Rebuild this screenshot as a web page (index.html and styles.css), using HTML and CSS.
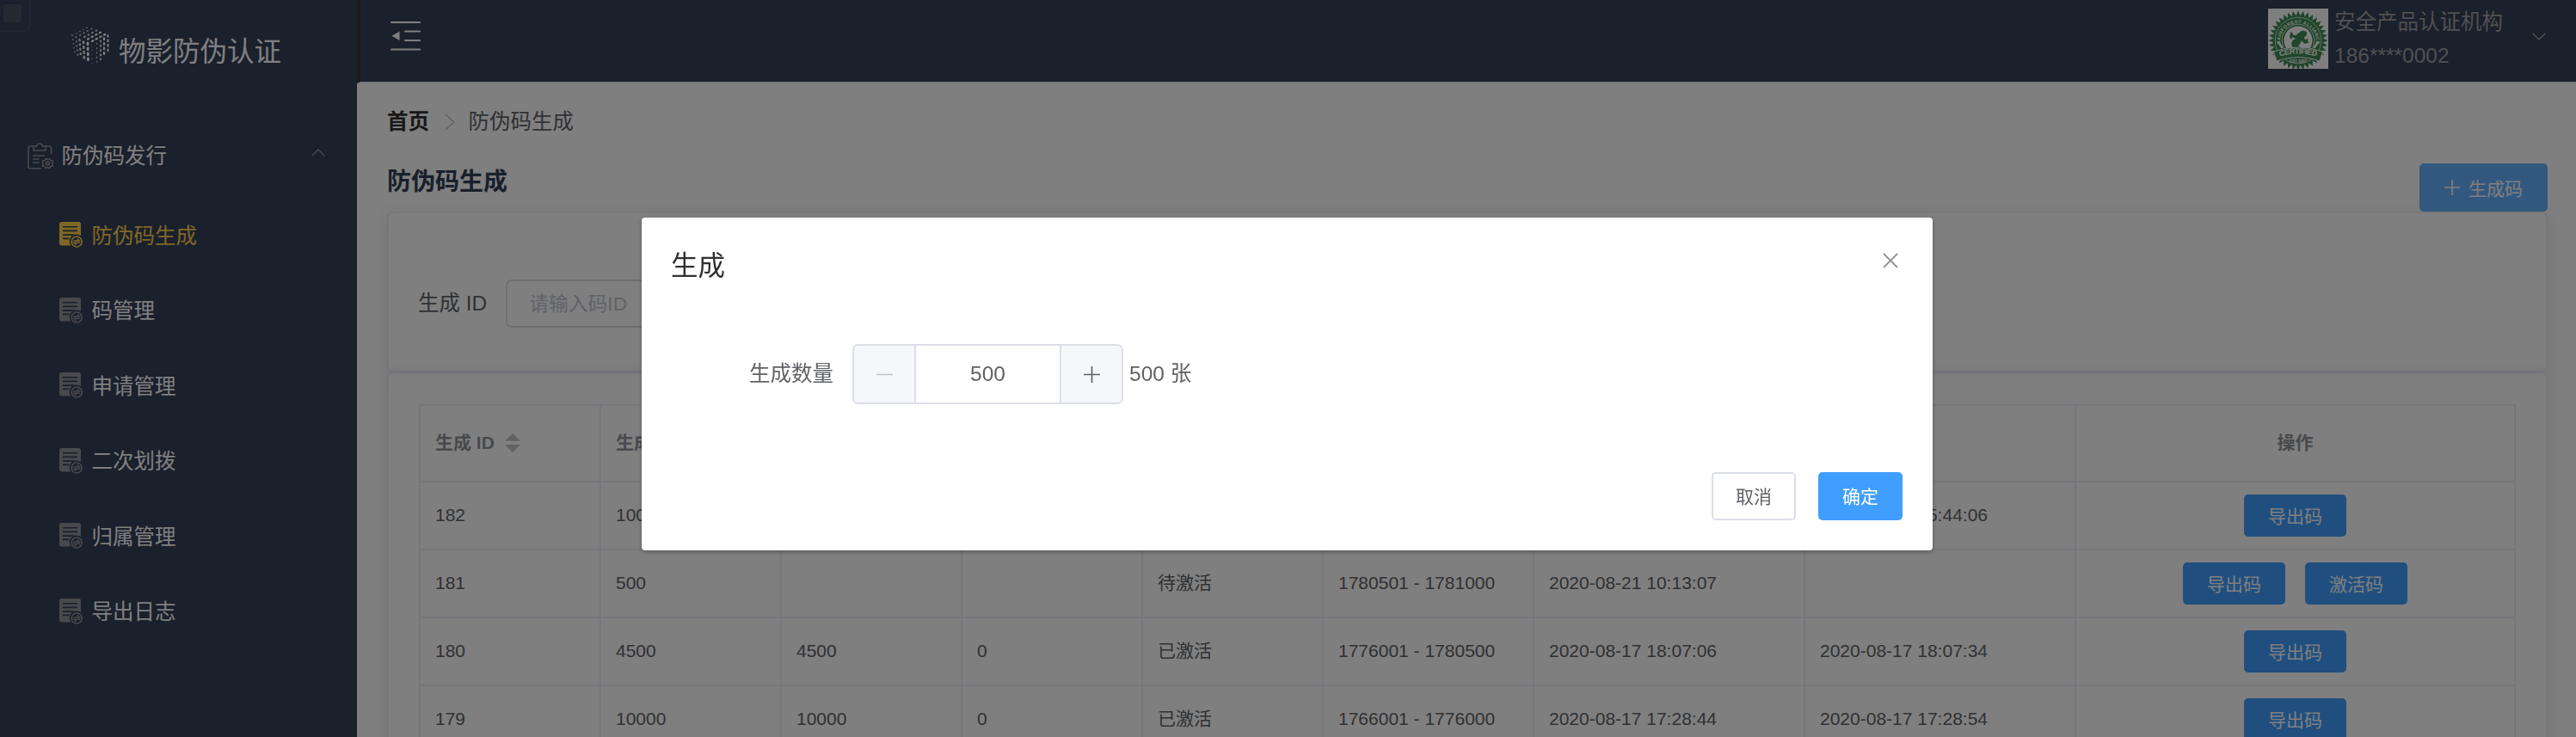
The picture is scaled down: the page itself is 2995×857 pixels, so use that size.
FILE: index.html
```html
<!DOCTYPE html>
<html lang="zh-CN">
<head>
<meta charset="utf-8">
<title>防伪码生成</title>
<link rel="stylesheet" href="styles.css">
</head>
<body>
<svg class="defs" width="0" height="0" aria-hidden="true">
  <defs>
    <symbol id="doc" viewBox="0 0 28 31">
      <path fill="currentColor" fill-rule="evenodd" d="M3 0H22.500Q25 0 25 2.500V16.200A8.200 8.200 0 0 0 13.300 27.500H3Q0 27.500 0 24.500V3Q0 0 3 0ZM4 5V6.600H21V5ZM4 9.600V11.200H21V9.600ZM4 14.300V15.900H16L18 14.300ZM4 18.600V20.200H11.500V18.600Z"/>
      <circle cx="20.200" cy="23" r="6" fill="none" stroke="currentColor" stroke-width="1.700"/>
      <path d="M16.500 22H23.500L20.800 19.300M23.900 24.200H17L19.700 26.900" fill="none" stroke="currentColor" stroke-width="1.400"/>
    </symbol>
    <path id="tooth" d="M-3.300 -27L0 -34.500L3.300 -27Z"/>
    <g id="teeth3"><use href="#tooth"/><use href="#tooth" transform="rotate(10)"/><use href="#tooth" transform="rotate(20)"/></g>
    <g id="teeth9"><use href="#teeth3"/><use href="#teeth3" transform="rotate(30)"/><use href="#teeth3" transform="rotate(60)"/></g>
    <path id="arcTop" d="M15.500 46A21 21 0 1 1 54.500 46"/>
    <path id="arcMid" d="M12.500 56Q35 49 57.500 56"/>
  </defs>
</svg>

<div class="app">
  <aside class="sidebar">
    <div class="corner"><span class="corner-dot"></span></div>
    <div class="brand">
      <svg class="brand-logo" viewBox="0 0 50 52">
        <g stroke="#fff" stroke-linecap="round" fill="none">
          <path d="M4 15L7 35" stroke-width="1.800" stroke-dasharray="0.100 4.800" opacity=".7"/>
          <path d="M8.300 17L10.500 38" stroke-width="2" stroke-dasharray="0.400 4.700" opacity=".75"/>
          <path d="M12.500 20L14 41" stroke-width="2.400" stroke-dasharray="1 4.400" opacity=".85"/>
          <path d="M17 22.500L18 45" stroke-width="2.600" stroke-dasharray="1.500 4.300" opacity=".9"/>
          <path d="M22 24L22.500 47" stroke-width="2.900" stroke-dasharray="1.800 4.200"/>
          <path d="M27 27V48" stroke-width="1.400" stroke-dasharray="0.100 5" opacity=".6"/>
          <path d="M32.500 24.500V46" stroke-width="1.700" stroke-dasharray="0.500 4.800" opacity=".7"/>
          <path d="M37 21.500V43" stroke-width="2.200" stroke-dasharray="1 4.300" opacity=".85"/>
          <path d="M41 18.500V39" stroke-width="2.400" stroke-dasharray="1.400 4.200"/>
          <path d="M45.500 15V35" stroke-width="2" stroke-dasharray="1.700 3.800"/>
          <path d="M9 13L25 4" stroke-width="1.600" stroke-dasharray="0.100 4.500" opacity=".7"/>
          <path d="M13 15L30 5.500" stroke-width="1.800" stroke-dasharray="0.500 4.500" opacity=".75"/>
          <path d="M18 17L35 8" stroke-width="2" stroke-dasharray="0.900 4.200" opacity=".85"/>
          <path d="M22 19.500L40 10" stroke-width="2.200" stroke-dasharray="1.400 3.800"/>
          <path d="M27 22L45 12.500" stroke-width="2.200" stroke-dasharray="1.600 3.600"/>
        </g>
      </svg>
      <span class="brand-name">物影防伪认证</span>
    </div>
    <nav class="menu">
      <div class="menu-title">
        <svg class="menu-icon" viewBox="0 0 30 31" fill="none" stroke="currentColor" stroke-width="1.600">
          <path d="M7 4H3Q1 4 1 6V28Q1 30 3 30H16M21 4H25Q27.500 4 27.500 6V13"/>
          <path d="M7 9V4H10.500Q11 1 14 1T17.500 4H21V9ZM6 15H20M6 19H13.500M6 23H14"/>
          <circle cx="23.500" cy="24" r="1.900"/>
          <path d="M21.500 18.500L23.500 19.300L25.600 18.500L27.200 20.800H29.400V23L28.700 24L29.400 25.200V27.300H27.200L25.600 29.400L23.500 28.700L21.500 29.400L19.800 27.300H17.600V25.200L18.400 24L17.600 23V20.800H19.800Z" stroke-linejoin="round"/>
        </svg>
        <span>防伪码发行</span>
        <svg class="menu-arrow" viewBox="0 0 16 9"><path d="M.7 8.300L8 1L15.300 8.300" fill="none" stroke="currentColor" stroke-width="1.400"/></svg>
      </div>
      <div class="menu-item active"><svg class="doc"><use href="#doc"/></svg><span>防伪码生成</span></div>
      <div class="menu-item"><svg class="doc"><use href="#doc"/></svg><span>码管理</span></div>
      <div class="menu-item"><svg class="doc"><use href="#doc"/></svg><span>申请管理</span></div>
      <div class="menu-item"><svg class="doc"><use href="#doc"/></svg><span>二次划拨</span></div>
      <div class="menu-item"><svg class="doc"><use href="#doc"/></svg><span>归属管理</span></div>
      <div class="menu-item"><svg class="doc"><use href="#doc"/></svg><span>导出日志</span></div>
    </nav>
  </aside>

  <div class="body">
    <header class="topbar">
      <svg class="fold" viewBox="0 0 35 36"><path d="M1 2H34M17 12.500H34M17 23H34M1 33.500H34" stroke="currentColor" stroke-width="2.200" stroke-linecap="round"/><path d="M1.500 17.800L10.500 12.500V23Z" fill="currentColor"/></svg>
      <div class="user">
        <svg class="avatar" viewBox="0 0 70 70">
          <rect width="70" height="70" fill="#fff"/>
          <g transform="translate(35 37)" fill="#3f8b57">
            <use href="#teeth9"/><use href="#teeth9" transform="rotate(90)"/><use href="#teeth9" transform="rotate(180)"/><use href="#teeth9" transform="rotate(270)"/>
            <circle r="28.500"/>
          </g>
          <circle cx="35" cy="37" r="26.800" fill="none" stroke="#fff" stroke-width=".7"/>
          <circle cx="35" cy="37" r="18.800" fill="none" stroke="#fff" stroke-width=".8"/>
          <circle cx="35" cy="37" r="16.500" fill="#fff"/>
          <path d="M36 28Q39 25 42 26Q45 26 45 29Q46 31 42 33Q42 36 44 36L47 35L46 38L48 39L43 41Q40 39 39 37Q38 41 35 43L38 45H29Q26 42 28 38Q29 36 32 35L28 33L27 36L25 33L26 27L29 29L29 31L32 31Z" fill="#3f8b57"/>
          <path d="M12 39L16 45M58 39L54 45" stroke="#fff" stroke-width="2.400" stroke-linecap="round"/>
          <path d="M6.500 50Q35 40 63.500 50L60 61Q35 52 10 61Z" fill="#3f8b57" stroke="#fff" stroke-width="1"/>
          <text class="seal-small"><textPath href="#arcTop" startOffset="50%" text-anchor="middle" textLength="72">RAINFOREST ALLIANCE</textPath></text>
          <text class="seal-big"><textPath href="#arcMid" startOffset="50%" text-anchor="middle" textLength="43">CERTIFIED</textPath></text>
          <text class="seal-year" x="35" y="62.500" text-anchor="middle">EST 1987</text>
        </svg>
        <div class="user-text"><span>安全产品认证机构</span><span>186****0002</span></div>
        <svg class="user-arrow" viewBox="0 0 16 9"><path d="M.7 .7L8 8L15.300 .7" fill="none" stroke="currentColor" stroke-width="1.400"/></svg>
      </div>
    </header>

    <main class="main">
      <div class="crumbs"><b>首页</b><svg class="crumb-sep" viewBox="0 0 12 20"><path d="M1 1L10.500 10L1 19" fill="none" stroke="currentColor" stroke-width="1.600"/></svg><span>防伪码生成</span></div>
      <div class="heading">
        <h1>防伪码生成</h1>
        <button class="btn create"><svg class="plus" viewBox="0 0 18 18"><path d="M9 0V18M0 9H18" stroke="currentColor" stroke-width="1.600"/></svg>生成码</button>
      </div>
      <section class="card filter">
        <label>生成 ID</label>
        <div class="input">请输入码ID</div>
      </section>
      <section class="card list">
        <table class="table">
          <colgroup><col class="c-s"><col class="c-s"><col class="c-s"><col class="c-s"><col class="c-s"><col class="c-m"><col class="c-l"><col class="c-l"><col class="c-op"></colgroup>
          <thead>
            <tr><th><span class="sortable">生成 ID<svg class="sort" viewBox="0 0 18 22"><path d="M0 8.800L9 0L18 8.800ZM0 13L9 22L18 13Z" fill="currentColor"/></svg></span></th><th>生成数量</th><th></th><th></th><th></th><th></th><th></th><th></th><th class="op">操作</th></tr>
          </thead>
          <tbody>
            <tr><td>182</td><td>10000</td><td></td><td></td><td></td><td></td><td></td><td>2020-08-21 15:44:06</td><td class="op"><button class="btn small">导出码</button></td></tr>
            <tr><td>181</td><td>500</td><td></td><td></td><td>待激活</td><td>1780501 - 1781000</td><td>2020-08-21 10:13:07</td><td></td><td class="op"><button class="btn small">导出码</button><button class="btn small">激活码</button></td></tr>
            <tr><td>180</td><td>4500</td><td>4500</td><td>0</td><td>已激活</td><td>1776001 - 1780500</td><td>2020-08-17 18:07:06</td><td>2020-08-17 18:07:34</td><td class="op"><button class="btn small">导出码</button></td></tr>
            <tr><td>179</td><td>10000</td><td>10000</td><td>0</td><td>已激活</td><td>1766001 - 1776000</td><td>2020-08-17 17:28:44</td><td>2020-08-17 17:28:54</td><td class="op"><button class="btn small">导出码</button></td></tr>
          </tbody>
        </table>
      </section>
    </main>
  </div>
</div>

<div class="mask">
  <div class="dialog">
    <div class="dialog-head">
      <span>生成</span>
      <svg class="close" viewBox="0 0 18 18"><path d="M1 1L17 17M17 1L1 17" stroke="currentColor" stroke-width="1.800"/></svg>
    </div>
    <div class="dialog-body">
      <label>生成数量</label>
      <div class="stepper">
        <span class="step off"><svg class="step-icon" viewBox="0 0 19 19"><path d="M0 9.500H19" stroke="currentColor" stroke-width="1.700"/></svg></span>
        <span class="step-value">500</span>
        <span class="step"><svg class="step-icon" viewBox="0 0 19 19"><path d="M9.500 0V19M0 9.500H19" stroke="currentColor" stroke-width="1.700"/></svg></span>
      </div>
      <span class="total">500 张</span>
    </div>
    <div class="dialog-foot">
      <button class="btn plain">取消</button>
      <button class="btn confirm">确定</button>
    </div>
  </div>
</div>
</body>
</html>
```
FILE: styles.css
```css
* { box-sizing: border-box; }

body {
  margin: 0;
  height: 857px;
  overflow: hidden;
  background: #fff;
  color: #606266;
  font-family: "Liberation Sans", "Noto Sans CJK SC", sans-serif;
  font-size: 24.5px;
}

.defs { position: absolute; }

.app { display: flex; height: 857px; overflow: hidden; }

/* Sidebar */
.sidebar { position: relative; flex: none; width: 415px; background: #344058; }

.corner {
  position: absolute;
  left: -2px;
  top: -2px;
  width: 38px;
  height: 39px;
  padding: 7px 0 0 4px;
  border: 2px solid #424c60;
  border-radius: 0 0 8px 0;
}
.corner-dot { display: block; width: 21px; height: 21px; margin-top: -2px; border-radius: 3px; background: #4a5262; }

.brand { display: flex; height: 132px; padding: 26px 0 0 80px; color: #fff; }
.brand-logo { width: 50px; height: 52px; }
.brand-name { margin-left: 8px; font-size: 31.500px; line-height: 69px; }

.menu-title { display: flex; align-items: center; height: 98px; padding: 0 37px 0 32px; color: #fff; }
.menu-icon { width: 30px; height: 31px; margin-right: 9.500px; color: #909399; }
.menu-arrow { width: 16px; height: 9px; margin: 0 0 8px auto; color: #909399; }
.menu-item { display: flex; align-items: center; height: 87.500px; padding-left: 69px; color: #fff; }
.menu-title span, .menu-item span { padding-bottom: 3px; }
.doc { width: 28px; height: 31px; margin-right: 9.500px; color: #909399; }
.menu-item.active, .active .doc { color: #ffd04b; }

/* Top bar */
.body { flex: 1; min-width: 0; display: flex; flex-direction: column; }
.topbar {
  flex: none;
  display: flex;
  justify-content: space-between;
  height: 97px;
  padding: 0 35px;
  border-left: 4px solid #363434;
  border-bottom: 2px solid #ebeef5;
  background: #344058;
}
.fold { width: 35px; height: 36px; margin-top: 24px; color: #fff; }
.user { display: flex; color: #a0a0a0; }
.avatar { width: 70px; height: 70px; margin-top: 10px; }
.user-text { display: flex; flex-direction: column; margin: 5.500px 0 0 7px; line-height: 39.500px; }
.user-arrow { width: 16px; height: 9px; margin: 38px 0 0 34px; }
.seal-small { font: bold 5.500px "Liberation Sans", sans-serif; fill: #fff; }
.seal-big { font: bold 9px "Liberation Sans", sans-serif; fill: #fff; }
.seal-year { font: bold 4.500px "Liberation Sans", sans-serif; fill: #fff; }

/* Page */
.main { padding: 31px 33px 0 35px; }
.crumbs { display: flex; align-items: center; height: 28px; line-height: 28px; }
.crumbs b { color: #303133; }
.crumb-sep { width: 12px; height: 20px; margin: 0 15.500px 0 18px; color: #c0c4cc; }
.heading { display: flex; justify-content: space-between; height: 56px; margin-top: 34px; }
.heading h1 { margin: 0; font-size: 28px; line-height: 44px; color: #304156; }

.btn {
  display: inline-flex;
  align-items: center;
  justify-content: center;
  padding: 0 0 2px;
  border: 0;
  border-radius: 5px;
  background: #409eff;
  color: #fff;
  font-family: inherit;
  font-size: 21px;
}
.create { width: 149px; height: 56px; padding: 0; background: #66b1ff; }
.plus { width: 18px; height: 18px; margin-right: 10px; }
.small { width: 119px; height: 49px; }
.small + .small { margin-left: 23px; }

.card {
  border: 2px solid #ebeef5;
  border-radius: 7px;
  background: #fff;
  box-shadow: 0 3.500px 21px rgba(0, 0, 0, .1);
}
.filter { display: flex; height: 187px; padding: 77px 35px 0; }
.filter label { margin-left: -1px; line-height: 56px; }
.input {
  width: 350px;
  height: 56px;
  margin-left: 22px;
  padding-left: 25px;
  border: 2px solid #dcdfe6;
  border-radius: 7px;
  color: #c0c4cc;
  font-size: 22.750px;
  line-height: 52px;
}
.list { height: 700px; padding: 35px; }

.table {
  width: 2438px;
  table-layout: fixed;
  border-collapse: separate;
  border-spacing: 0;
  border: 2px solid #ebeef5;
  border-width: 2px 0 0 2px;
  font-size: 21px;
}
.c-s { width: 210px; }
.c-m { width: 245px; }
.c-l { width: 315px; }
.c-op { width: 511px; }
.table th, .table td {
  height: 79px;
  padding: 0 0 2px 17px;
  border-right: 2px solid #ebeef5;
  border-bottom: 2px solid #ebeef5;
  text-align: left;
  vertical-align: middle;
  white-space: nowrap;
  line-height: 40px;
}
.table th { height: 89px; color: #909399; }
.table .op { padding: 0; text-align: center; }
.table th.op { padding-bottom: 2px; }
.table .btn { vertical-align: middle; }
.sortable { display: flex; align-items: center; }
.sort { width: 18px; height: 22px; margin-left: 12px; color: #c0c4cc; }

/* Dialog */
.mask {
  position: fixed;
  inset: 0;
  padding: 253px 0 0 746px;
  background: rgba(0, 0, 0, .5);
}
.dialog {
  width: 1501px;
  height: 387px;
  border-radius: 4px;
  background: #fff;
  box-shadow: 0 2px 5px rgba(0, 0, 0, .3);
}
.dialog-head {
  display: flex;
  justify-content: space-between;
  height: 147px;
  padding: 35px 40px 0 34px;
  color: #303133;
  font-size: 31.500px;
  line-height: 43px;
}
.close { width: 18px; height: 18px; margin-top: 6px; color: #909399; }
.dialog-body { display: flex; height: 149px; padding-left: 125px; line-height: 70px; }
.stepper {
  display: flex;
  width: 315px;
  height: 70px;
  margin: 0 7px 0 22px;
  border: 2px solid #dcdfe6;
  border-radius: 7px;
  overflow: hidden;
}
.step { display: flex; align-items: center; justify-content: center; width: 70px; background: #f5f7fa; }
.step.off { color: #c0c4cc; }
.step-icon { width: 19px; height: 19px; }
.step-value {
  flex: 1;
  border: 2px solid #dcdfe6;
  border-width: 0 2px;
  text-align: center;
  line-height: 66px;
}
.dialog-foot { display: flex; justify-content: flex-end; gap: 26px; padding-right: 35px; }
.dialog-foot .btn { width: 98px; height: 56px; }
.dialog-foot .plain { border: 2px solid #dcdfe6; background: #fff; color: #606266; }
```
